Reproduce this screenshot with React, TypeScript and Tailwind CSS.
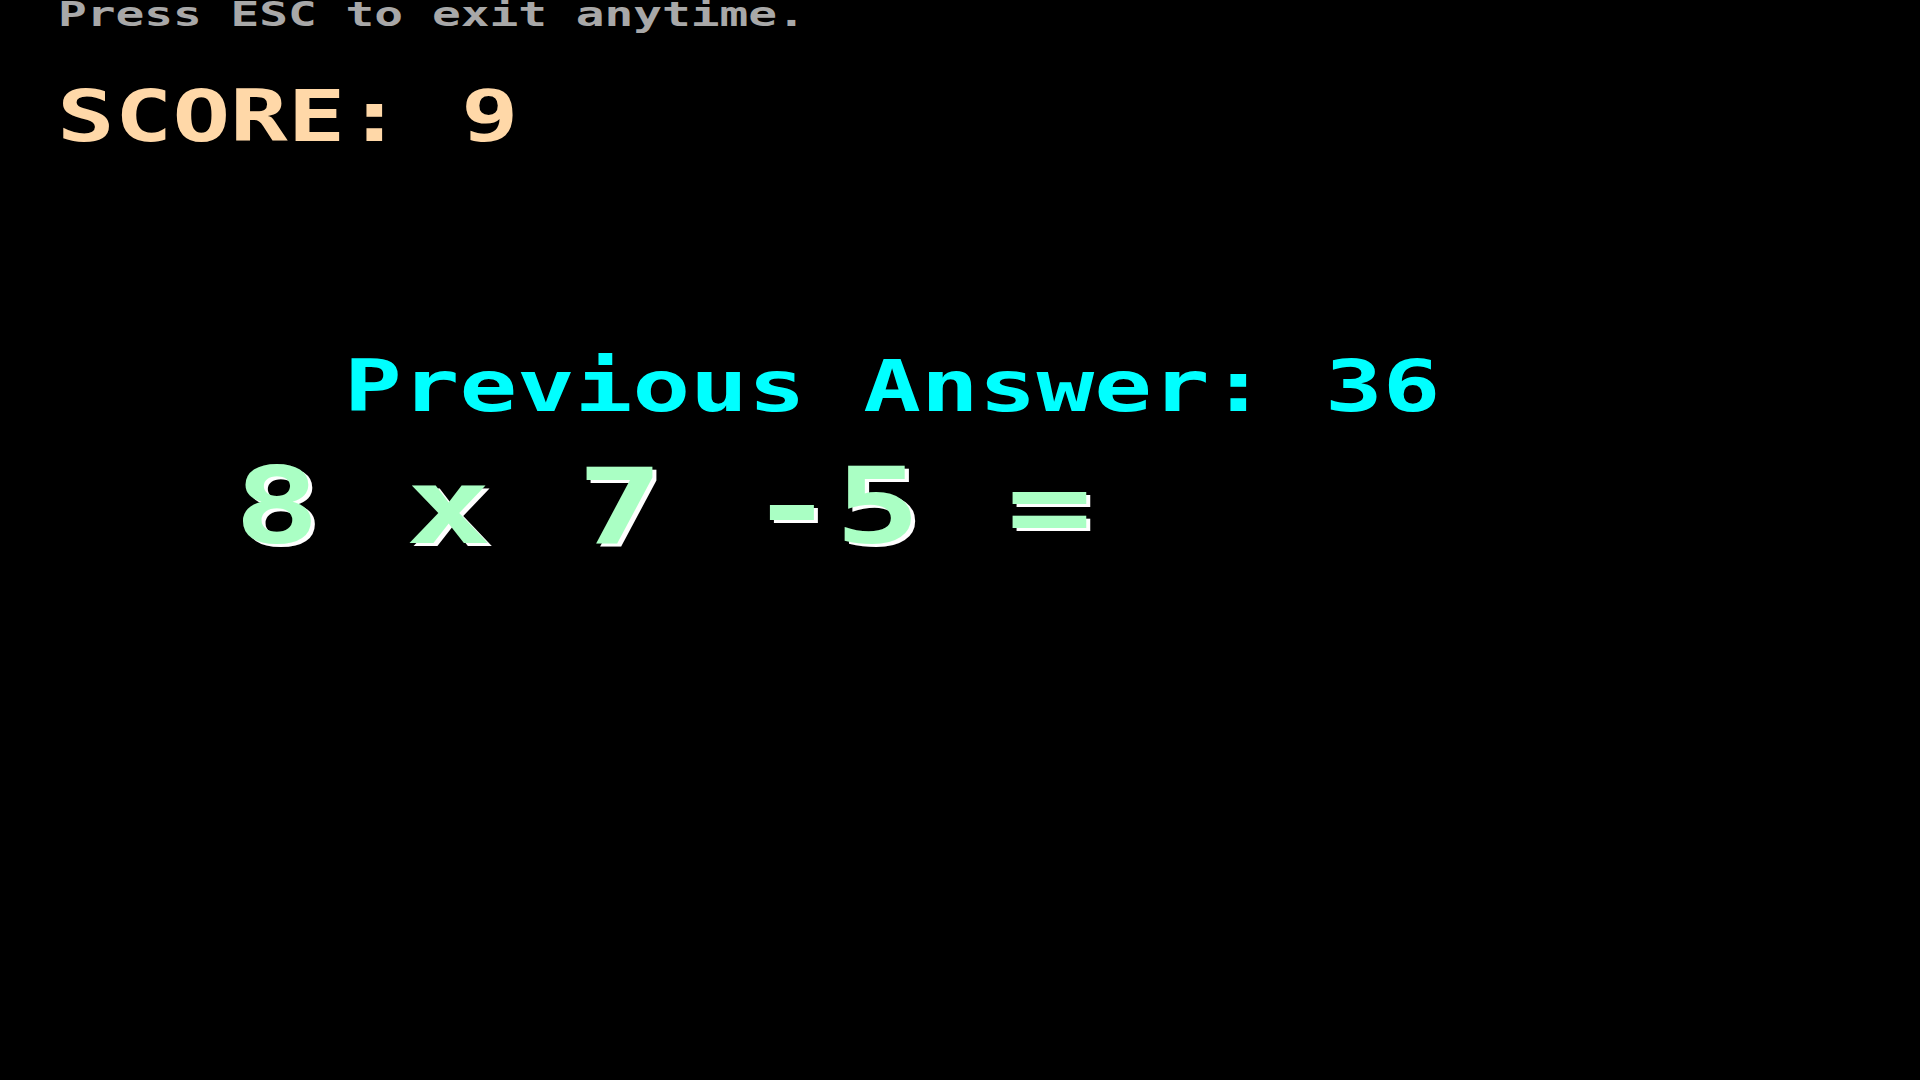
export default function App() {
  return (
    <main className="min-h-screen w-full bg-black overflow-hidden font-['DejaVu_Sans_Mono',monospace] font-bold whitespace-pre">
      {/* hint line */}
      <div className="pt-[1px] pl-[58px] text-[34px] leading-[26px] text-[#a8a8a8]">
        <span className="inline-block origin-left scale-x-[1.405]">Press ESC to exit anytime.</span>
      </div>

      {/* score */}
      <div className="mt-[54px] pl-[57px] text-[71px] leading-[71px] text-[#ffd8a8]">
        <span className="inline-block origin-left scale-x-[1.35]">SCORE: 9</span>
      </div>

      {/* previous answer */}
      <div className="mt-[199px] pl-[344px] text-[71px] leading-[71px] text-[#00ffff]">
        <span className="inline-block origin-left scale-x-[1.35]">Previous Answer: 36</span>
      </div>

      {/* current question */}
      <div className="mt-[32px] pl-[234px] text-[106px] leading-[106px] text-[#aaffc4] [text-shadow:3px_3px_0_#ffffff]">
        <span className="inline-block origin-left scale-x-[1.345]">8 x 7 -5 =</span>
      </div>
    </main>
  )
}
